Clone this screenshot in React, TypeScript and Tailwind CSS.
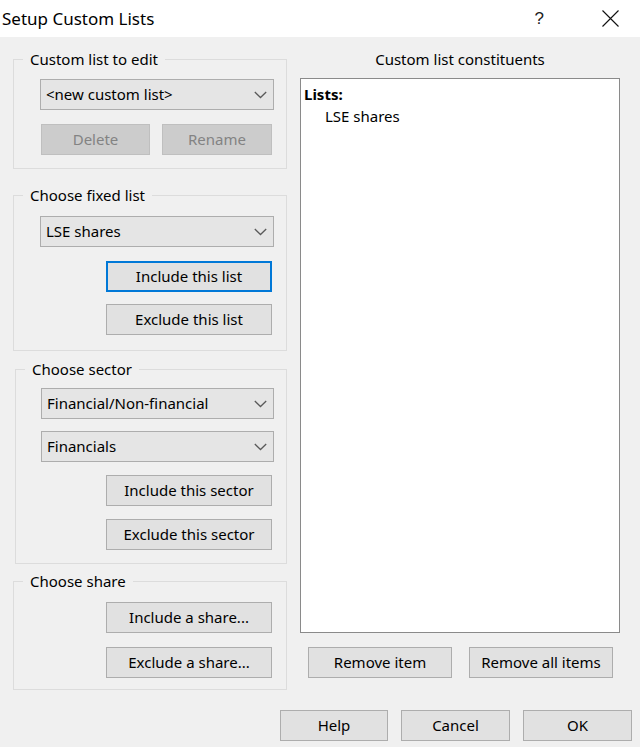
import React from "react";

const FONT = { fontFamily: '"Noto Sans", "Open Sans", sans-serif' };

function Chevron() {
  return (
    <svg width="13" height="8" viewBox="0 0 13 8" className="shrink-0">
      <path d="M0.8 1 L6.5 6.5 L12.2 1" fill="none" stroke="#5a5a5a" strokeWidth="1.3" />
    </svg>
  );
}

function Combo({ text, className = "" }: { text: string; className?: string }) {
  return (
    <div
      className={`h-[31px] bg-[#e5e5e5] border border-[#adadad] flex items-center justify-between pl-[5px] pr-[6px] text-[15px] text-black ${className}`}
    >
      <span className="leading-none">{text}</span>
      <Chevron />
    </div>
  );
}

function Btn({
  text,
  className = "",
  disabled = false,
  focused = false,
}: {
  text: string;
  className?: string;
  disabled?: boolean;
  focused?: boolean;
}) {
  const base = disabled
    ? "bg-[#cccccc] border border-[#bfbfbf] text-[#838383]"
    : focused
    ? "bg-[#e1e1e1] border-2 border-[#0078d7] text-black"
    : "bg-[#e1e1e1] border border-[#adadad] text-black";
  return (
    <div className={`h-[31px] flex items-center justify-center text-[15px] leading-none ${base} ${className}`}>
      {text}
    </div>
  );
}

function Group({
  label,
  className = "",
  children,
}: {
  label: string;
  className?: string;
  children: React.ReactNode;
}) {
  return (
    <fieldset className={`border border-[#dcdcdc] px-0 ${className}`}>
      <legend className="ml-[9px] px-[7px] text-[15px] leading-[20px] text-black">{label}</legend>
      {children}
    </fieldset>
  );
}

export default function App() {
  return (
    <div className="w-[640px] h-[747px] bg-[#f0f0f0] flex flex-col overflow-hidden" style={FONT}>
      {/* Title bar */}
      <div className="h-[37px] bg-white flex items-center justify-between shrink-0">
        <span className="pl-[2px] text-[17px] text-black leading-none">Setup Custom Lists</span>
        <div className="flex items-center">
          <span className="text-[17px] text-[#222] leading-none mr-[58px]" style={{ fontFamily: '"Liberation Sans", sans-serif' }}>?</span>
          <svg width="17" height="17" viewBox="0 0 17 17" className="mr-[21px]">
            <path d="M0.5 0.5 L16.5 16.5 M16.5 0.5 L0.5 16.5" stroke="#111" strokeWidth="1.1" />
          </svg>
        </div>
      </div>

      <div className="flex flex-col pl-[13px]">
        <div className="flex pt-[12px]">
          {/* Left column */}
          <div className="w-[274px] flex flex-col">
            <Group label="Custom list to edit" className="pb-[13px]">
              <div className="pt-[10px] pl-[26px] pr-[12px] flex flex-col">
                <Combo text="<new custom list>" />
                <div className="flex mt-[14px] pl-[1px] gap-[12px]">
                  <Btn text="Delete" disabled className="w-[109px]" />
                  <Btn text="Rename" disabled className="w-[110px]" />
                </div>
              </div>
            </Group>

            <Group label="Choose fixed list" className="mt-[16px] pb-[15px]">
              <div className="pt-[11px] pl-[26px] pr-[12px] flex flex-col">
                <Combo text="LSE shares" />
                <div className="flex flex-col items-end pr-[2px]">
                  <Btn text="Include this list" focused className="w-[166px] mt-[14px]" />
                  <Btn text="Exclude this list" className="w-[166px] mt-[12px]" />
                </div>
              </div>
            </Group>

            <Group label="Choose sector" className="mt-[8px] pb-[13px] ml-[2px]">
              <div className="pt-[9px] pl-[25px] pr-[12px] flex flex-col">
                <Combo text="Financial/Non-financial" />
                <Combo text="Financials" className="mt-[12px]" />
                <div className="flex flex-col items-end pr-[2px]">
                  <Btn text="Include this sector" className="w-[166px] mt-[13px]" />
                  <Btn text="Exclude this sector" className="w-[166px] mt-[13px]" />
                </div>
              </div>
            </Group>

            <Group label="Choose share" className="mt-[7px] pb-[11px]">
              <div className="pt-[11px] pr-[14px] flex flex-col items-end">
                <Btn text="Include a share..." className="w-[166px]" />
                <Btn text="Exclude a share..." className="w-[166px] mt-[14px]" />
              </div>
            </Group>
          </div>

          {/* Right column */}
          <div className="ml-[13px] w-[320px] flex flex-col">
            <div className="h-[20px] leading-[20px] text-[15px] text-black text-center">Custom list constituents</div>
            <div className="mt-[9px] h-[555px] bg-white border border-[#8a8a8a] pl-[3px] pt-[4px] text-[15px] text-black">
              <div className="font-bold leading-[22px]">Lists:</div>
              <div className="pl-[21px] leading-[22px]">LSE shares</div>
            </div>
            <div className="flex mt-[14px] pl-[8px] gap-[17px]">
              <Btn text="Remove item" className="w-[144px]" />
              <Btn text="Remove all items" className="w-[144px]" />
            </div>
          </div>
        </div>

        {/* Footer */}
        <div className="flex justify-end gap-[13px] pr-[8px] mt-[20px]">
          <Btn text="Help" className="w-[108px]" />
          <Btn text="Cancel" className="w-[109px]" />
          <Btn text="OK" className="w-[109px]" />
        </div>
      </div>
    </div>
  );
}
